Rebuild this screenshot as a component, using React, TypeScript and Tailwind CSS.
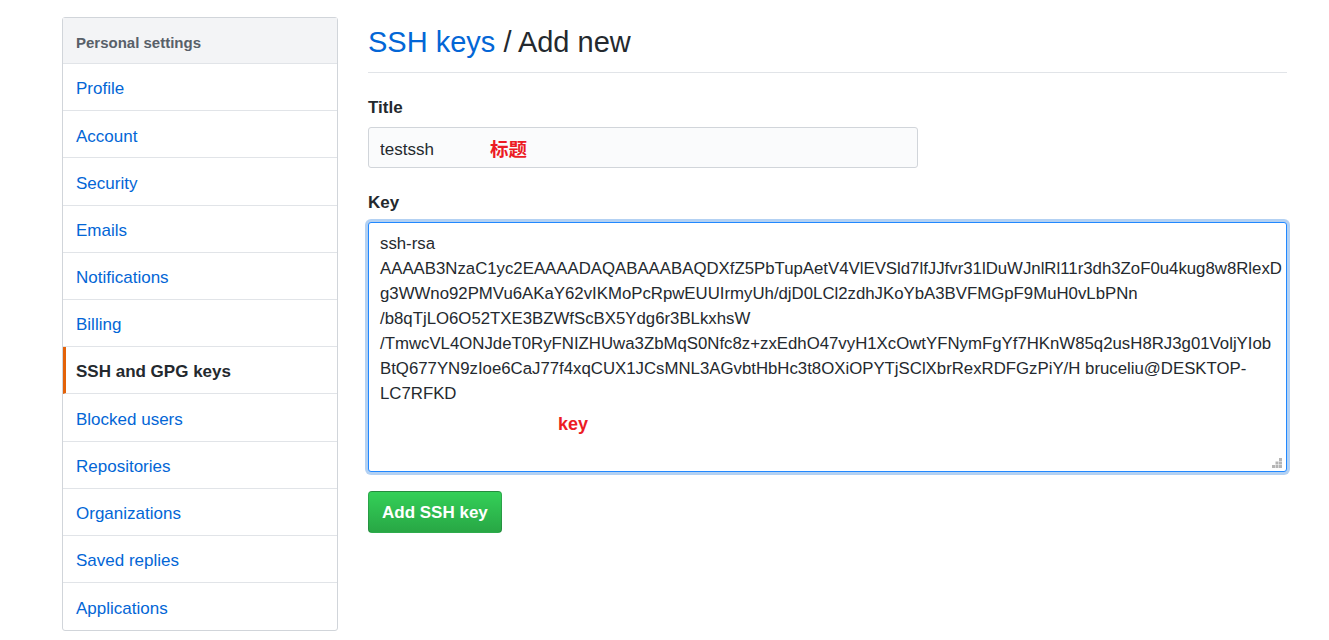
const navItems = [
  "Profile",
  "Account",
  "Security",
  "Emails",
  "Notifications",
  "Billing",
  "SSH and GPG keys",
  "Blocked users",
  "Repositories",
  "Organizations",
  "Saved replies",
  "Applications",
];

const keyLines = [
  "ssh-rsa",
  "AAAAB3NzaC1yc2EAAAADAQABAAABAQDXfZ5PbTupAetV4VlEVSld7lfJJfvr31lDuWJnlRl11r3dh3ZoF0u4kug8w8RlexD",
  "g3WWno92PMVu6AKaY62vIKMoPcRpwEUUIrmyUh/djD0LCl2zdhJKoYbA3BVFMGpF9MuH0vLbPNn",
  "/b8qTjLO6O52TXE3BZWfScBX5Ydg6r3BLkxhsW",
  "/TmwcVL4ONJdeT0RyFNIZHUwa3ZbMqS0Nfc8z+zxEdhO47vyH1XcOwtYFNymFgYf7HKnW85q2usH8RJ3g01VoljYIob",
  "BtQ677YN9zIoe6CaJ77f4xqCUX1JCsMNL3AGvbtHbHc3t8OXiOPYTjSClXbrRexRDFGzPiY/H bruceliu@DESKTOP-",
  "LC7RFKD",
];

const font = "font-['Segoe_UI','Liberation_Sans',sans-serif]";

function Sidebar() {
  return (
    <nav className="w-[276px] shrink-0 rounded-[3px] border border-[#d1d5da] bg-white">
      <div className="flex h-[46px] items-center border-b border-[#e1e4e8] bg-[#f3f4f6] px-[13px] pt-[5px] text-[15px] font-semibold text-[#586069]">
        Personal settings
      </div>
      {navItems.map((item, i) => {
        const active = item === "SSH and GPG keys";
        return (
          <div
            key={item}
            className={
              "flex h-[47.2px] items-center px-[13px] pt-[4px] text-[17px] " +
              (i < navItems.length - 1 ? "border-b border-[#e1e4e8] " : "") +
              (active
                ? "border-l-[3px] border-l-[#e36209] pl-[10px] font-semibold text-[#24292e]"
                : "text-[#0366d6]")
            }
          >
            {item}
          </div>
        );
      })}
    </nav>
  );
}

// dotted grip drawn in the textarea corner
function Grip() {
  return (
    <svg
      width="10"
      height="10"
      viewBox="0 0 10 10"
      className="pointer-events-none absolute bottom-[4px] right-[5px]"
    >
      <g fill="#b5b5b5">
        <rect x="7" y="0" width="3" height="3" />
        <rect x="3.5" y="3.5" width="3" height="3" />
        <rect x="7" y="3.5" width="3" height="3" />
        <rect x="0" y="7" width="3" height="3" />
        <rect x="3.5" y="7" width="3" height="3" />
        <rect x="7" y="7" width="3" height="3" />
      </g>
    </svg>
  );
}

export default function App() {
  return (
    <div className={`min-h-[640px] bg-white text-[#24292e] ${font}`}>
      <div className="flex gap-[30px] pl-[62px] pt-[17px]">
        <Sidebar />
        <main className="w-[919px]">
          <h1 className="flex h-[56px] items-center border-b border-[#e1e4e8] pb-[4px] text-[29px] font-normal">
            <span className="text-[#0366d6]">SSH keys</span>
            <span>&nbsp;/ Add new</span>
          </h1>
          <div className="mt-[22px] text-[17px] font-semibold">Title</div>
          <div className="relative mt-[6px] w-[550px]">
            <input
              readOnly
              value="testssh"
              className="h-[41px] w-full rounded-[3px] border border-[#d1d5da] bg-[#fafbfc] px-[11px] pt-[5px] text-[17px] text-[#24292e] outline-none"
            />
            <span className="absolute left-[122px] top-[8px] text-[18.5px] font-bold text-[#ec1c24] font-['Noto_Sans_CJK_SC',sans-serif]">
              标题
            </span>
          </div>
          <div className="mt-[22px] text-[17px] font-semibold">Key</div>
          <div className="relative mt-[7px]">
            <textarea
              readOnly
              wrap="off"
              value={keyLines.join("\n")}
              className="block h-[250px] w-full resize-none overflow-hidden rounded-[3px] border border-[#2188ff] bg-white px-[11px] py-[8px] text-[16.8px] leading-[25px] text-[#24292e] shadow-[0_0_0_3px_rgba(3,102,214,0.3)] outline-none"
            />
            <span className="absolute left-[190px] top-[189px] text-[18px] font-bold text-[#ec1c24]">
              key
            </span>
            <Grip />
          </div>
          <button className="mt-[19px] h-[42px] rounded-[4px] border border-[rgba(27,31,35,0.2)] bg-gradient-to-b from-[#34d058] to-[#28a745] px-[13px] pt-[2px] text-[17px] font-semibold text-white">
            Add SSH key
          </button>
        </main>
      </div>
    </div>
  );
}
